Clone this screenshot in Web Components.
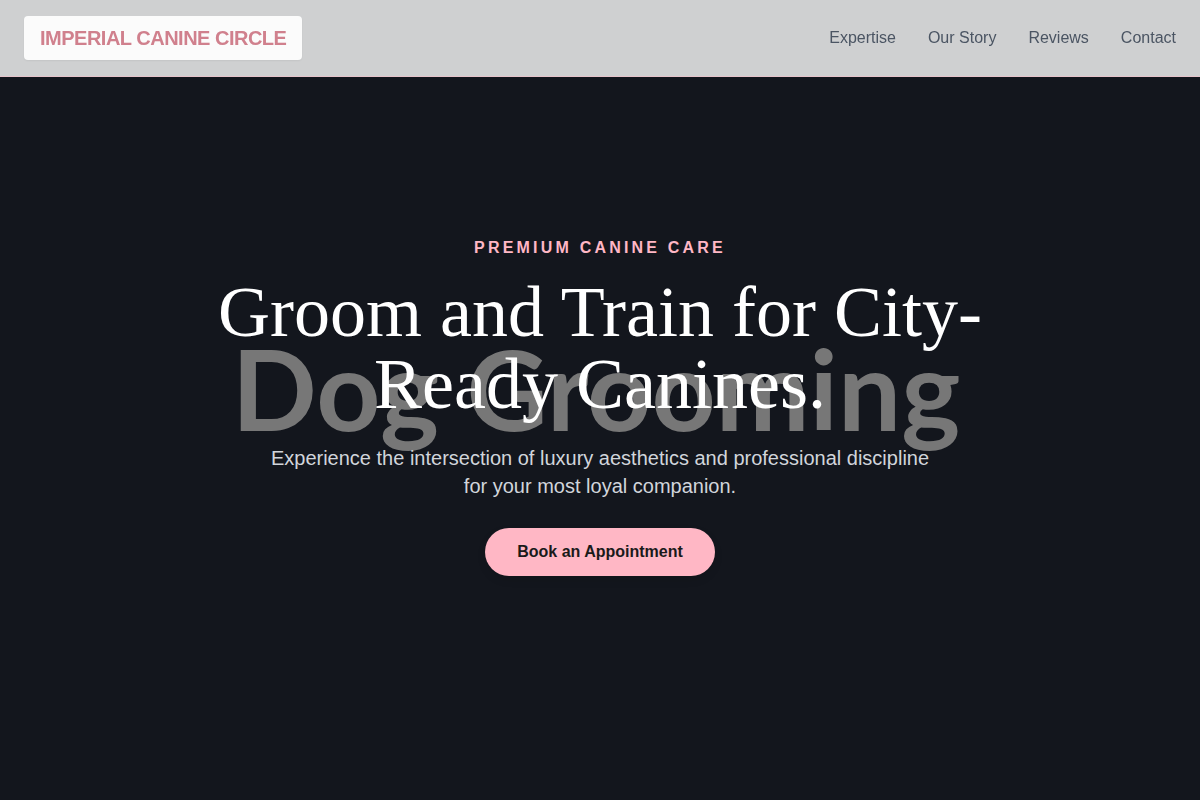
<!DOCTYPE html>
<html lang="en">
<head>
<meta charset="utf-8">
<meta name="viewport" content="width=device-width, initial-scale=1">
<title>Imperial Canine Circle</title>
<style>
  body { margin: 0; background: #13161d; font-family: "Liberation Sans", Arial, sans-serif; font-size: 16px; line-height: 24px; }
</style>
</head>
<body>
<site-header>
  <brand-mark slot="brand">IMPERIAL CANINE CIRCLE</brand-mark>
  <nav-link to="#expertise">Expertise</nav-link>
  <nav-link to="#story">Our Story</nav-link>
  <nav-link to="#reviews">Reviews</nav-link>
  <nav-link to="#contact">Contact</nav-link>
</site-header>
<main>
  <hero-section>
    <span slot="backdrop">Dog Grooming</span>
    <span slot="eyebrow">PREMIUM CANINE CARE</span>
    <span slot="title">Groom and Train for City-Ready Canines.</span>
    <span slot="lead">Experience the intersection of luxury aesthetics and professional discipline for your most loyal companion.</span>
    <action-button slot="action">Book an Appointment</action-button>
  </hero-section>
</main>
<script>
  const define = (name, html, setup) => customElements.define(name, class extends HTMLElement {
    constructor() {
      super();
      this.attachShadow({ mode: "open" }).innerHTML = html;
    }
    connectedCallback() { if (setup) setup(this); }
  });

  define("site-header", `
    <style>
      :host { display: block; position: fixed; top: 0; left: 0; right: 0; z-index: 2; }
      header { display: flex; flex-wrap: wrap; align-items: center; justify-content: space-between; gap: 16px;
        padding: 16px 24px; background: rgba(255, 255, 255, 0.8); border-bottom: 1px solid rgba(255, 183, 197, 0.5); }
      nav { display: flex; flex-wrap: wrap; gap: 8px 32px; }
    </style>
    <header><slot name="brand"></slot><nav aria-label="Main"><slot></slot></nav></header>`);

  define("brand-mark", `
    <style>
      :host { display: block; }
      a { display: block; padding: 8px 16px; border-radius: 4px; background: #fbfbfb; color: #d0808d;
        font-size: 20px; line-height: 28px; font-weight: 700; letter-spacing: -0.025em; text-decoration: none;
        box-shadow: 0 1px 2px rgba(0, 0, 0, 0.06); }
    </style>
    <a href="#"><slot></slot></a>`);

  define("nav-link", `
    <style>
      :host { display: block; }
      a { color: #4b5563; text-decoration: none; }
      a:hover { color: #d0808d; }
    </style>
    <a><slot></slot></a>`,
    el => { el.shadowRoot.querySelector("a").href = el.getAttribute("to"); });

  define("hero-section", `
    <style>
      :host { display: block; }
      section { display: grid; place-items: center; min-height: 100vh; background: #13161d; text-align: center; overflow: hidden; }
      section > * { grid-area: 1 / 1; }
      .backdrop { padding: 0 8px 24px 0; color: #777777; font-family: Lato, sans-serif; font-size: 112px; line-height: 136px; font-weight: 700; white-space: nowrap; }
      .content { z-index: 1; box-sizing: border-box; width: 100%; max-width: 896px; padding: 12px 24px 0; }
      p, h1 { margin: 0; }
      .eyebrow { color: #ffb7c5; font-weight: 700; letter-spacing: 0.2em; margin-bottom: 16px; }
      h1 { color: #ffffff; font-family: "Liberation Serif", "Times New Roman", serif; font-size: 72px; line-height: 72px; font-weight: 400; margin-bottom: 24px; }
      .lead { max-width: 672px; margin: 0 auto 28px; color: #d1d5db; font-size: 20px; line-height: 28px; }
    </style>
    <section>
      <div class="backdrop" aria-hidden="true"><slot name="backdrop"></slot></div>
      <div class="content">
        <p class="eyebrow"><slot name="eyebrow"></slot></p>
        <h1><slot name="title"></slot></h1>
        <p class="lead"><slot name="lead"></slot></p>
        <slot name="action"></slot>
      </div>
    </section>`);

  define("action-button", `
    <style>
      :host { display: block; }
      button { padding: 12px 32px; border: 0; border-radius: 24px; background: #ffb7c5; color: #1a1a1a;
        font: inherit; font-weight: 700; cursor: pointer; box-shadow: 0 4px 8px rgba(0, 0, 0, 0.1); }
    </style>
    <button type="button"><slot></slot></button>`);
</script>
</body>
</html>
